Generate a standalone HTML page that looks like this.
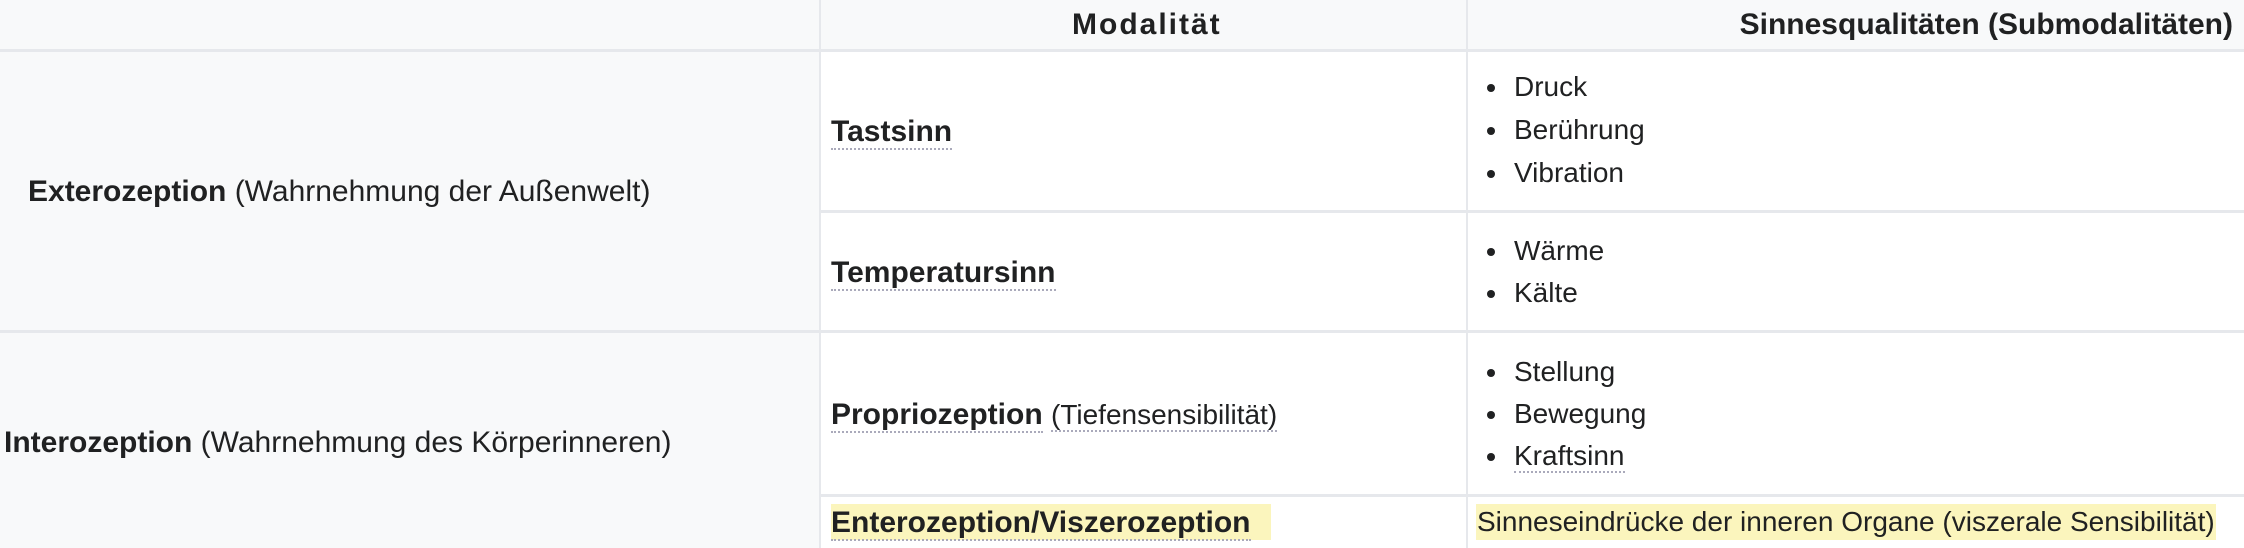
<!DOCTYPE html>
<html><head><meta charset="utf-8"><style>
body{margin:0;width:2244px;height:548px;overflow:hidden;background:#fff;font-family:"Liberation Sans",sans-serif;color:#202122;position:relative}
.a{position:absolute}
.bg{background:#f8f9fa}
.h{background:#e6e8ec}
.v{background:#e6e8ec;width:2px}
.t{position:absolute;font-size:30px;line-height:30px;white-space:nowrap}
.b{font-weight:bold}
.u{border-bottom:2px dotted #aab;}
.li{position:absolute;left:1514px;font-size:28px;line-height:30px;white-space:nowrap}
.li:before{content:"";position:absolute;left:-27px;top:12px;width:8px;height:8px;border-radius:50%;background:#202122}
.hl{background:#fbf5bd}
</style></head><body>
<div class="a bg" style="left:0;top:0;width:2244px;height:50px"></div>
<div class="a bg" style="left:0;top:50px;width:820px;height:498px"></div>
<div class="a h" style="left:0;top:49px;width:2244px;height:3px"></div>
<div class="a h" style="left:820px;top:210px;width:1424px;height:3px"></div>
<div class="a h" style="left:0;top:330px;width:2244px;height:3px"></div>
<div class="a h" style="left:820px;top:494px;width:1424px;height:3px"></div>
<div class="a v" style="left:819px;top:0;height:548px"></div>
<div class="a v" style="left:1466px;top:0;height:548px"></div>

<div class="t b" style="left:1072px;top:10px;letter-spacing:2px">Modalität</div>
<div class="t b" style="right:11px;top:10px">Sinnesqualitäten (Submodalitäten)</div>

<div class="t" style="left:28px;top:177px"><b>Exterozeption</b> (Wahrnehmung der Außenwelt)</div>
<div class="t" style="left:4px;top:428px"><b>Interozeption</b> (Wahrnehmung des Körperinneren)</div>

<div class="t b" style="left:831px;top:117px"><span class="u">Tastsinn</span></div>
<div class="t b" style="left:831px;top:258px"><span class="u">Temperatursinn</span></div>
<div class="t" style="left:831px;top:400px"><b class="u">Propriozeption</b> <span class="u" style="font-size:28px">(Tiefensensibilität)</span></div>
<div class="a hl" style="left:831px;top:504px;width:440px;height:36px"></div>
<div class="t b" style="left:831px;top:508px"><span class="u">Enterozeption/Viszerozeption</span></div>

<div class="li" style="top:72px">Druck</div>
<div class="li" style="top:115px">Berührung</div>
<div class="li" style="top:158px">Vibration</div>
<div class="li" style="top:236px">Wärme</div>
<div class="li" style="top:278px">Kälte</div>
<div class="li" style="top:357px">Stellung</div>
<div class="li" style="top:399px">Bewegung</div>
<div class="li" style="top:441px"><span class="u">Kraftsinn</span></div>
<div class="a hl" style="left:1476px;top:504px;width:740px;height:36px"></div>
<div class="t" style="left:1477px;top:507px;font-size:28px">Sinneseindrücke der inneren Organe (viszerale Sensibilität)</div>
</body></html>
